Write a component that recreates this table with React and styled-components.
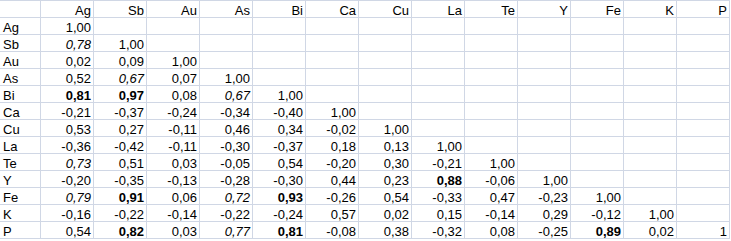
import React from 'react';
import styled, { createGlobalStyle } from 'styled-components';

const GlobalStyle = createGlobalStyle`
  body {
    margin: 0;
    background: #ffffff;
    font-family: 'Liberation Sans', Arial, sans-serif;
  }
`;

const elements = ['Ag', 'Sb', 'Au', 'As', 'Bi', 'Ca', 'Cu', 'La', 'Te', 'Y', 'Fe', 'K', 'P'];

// "b:" = bold (strong correlation), "i:" = italic
const rows = [
  ['1,00'],
  ['i:0,78', '1,00'],
  ['0,02', '0,09', '1,00'],
  ['0,52', 'i:0,67', '0,07', '1,00'],
  ['b:0,81', 'b:0,97', '0,08', 'i:0,67', '1,00'],
  ['-0,21', '-0,37', '-0,24', '-0,34', '-0,40', '1,00'],
  ['0,53', '0,27', '-0,11', '0,46', '0,34', '-0,02', '1,00'],
  ['-0,36', '-0,42', '-0,11', '-0,30', '-0,37', '0,18', '0,13', '1,00'],
  ['i:0,73', '0,51', '0,03', '-0,05', '0,54', '-0,20', '0,30', '-0,21', '1,00'],
  ['-0,20', '-0,35', '-0,13', '-0,28', '-0,30', '0,44', '0,23', 'b:0,88', '-0,06', '1,00'],
  ['i:0,79', 'b:0,91', '0,06', 'i:0,72', 'b:0,93', '-0,26', '0,54', '-0,33', '0,47', '-0,23', '1,00'],
  ['-0,16', '-0,22', '-0,14', '-0,22', '-0,24', '0,57', '0,02', '0,15', '-0,14', '0,29', '-0,12', '1,00'],
  ['0,54', 'b:0,82', '0,03', 'i:0,77', 'b:0,81', '-0,08', '0,38', '-0,32', '0,08', '-0,25', 'b:0,89', '0,02', '1'],
];

const Sheet = styled.div`
  display: grid;
  grid-template-columns: 41px repeat(13, 53px);
  grid-auto-rows: 17px;
  width: max-content;
  border-top: 1px solid #d0d7e5;
  color: #000000;
  font-size: 13px;
`;

const Cell = styled.div`
  box-sizing: border-box;
  height: 17px;
  padding: 3px 2px 0 3px;
  line-height: 14px;
  border-right: 1px solid #d0d7e5;
  border-bottom: 1px solid #d0d7e5;
  text-align: ${(p) => (p.$left ? 'left' : 'right')};
  font-weight: ${(p) => (p.$bold ? 700 : 400)};
  font-style: ${(p) => (p.$italic ? 'italic' : 'normal')};
  white-space: nowrap;
  overflow: visible;
`;

const Value = ({ raw }) => {
  if (!raw) return <Cell />;
  const bold = raw.startsWith('b:');
  const italic = raw.startsWith('i:');
  const text = bold || italic ? raw.slice(2) : raw;
  return (
    <Cell $bold={bold} $italic={italic}>
      {text}
    </Cell>
  );
};

const App = () => (
  <>
    <GlobalStyle />
    <Sheet>
      <Cell />
      {elements.map((el) => (
        <Cell key={el}>{el}</Cell>
      ))}
      {elements.map((el, r) => (
        <React.Fragment key={el}>
          <Cell $left>{el}</Cell>
          {elements.map((_, c) => (
            <Value key={c} raw={rows[r][c]} />
          ))}
        </React.Fragment>
      ))}
    </Sheet>
  </>
);

export default App;
